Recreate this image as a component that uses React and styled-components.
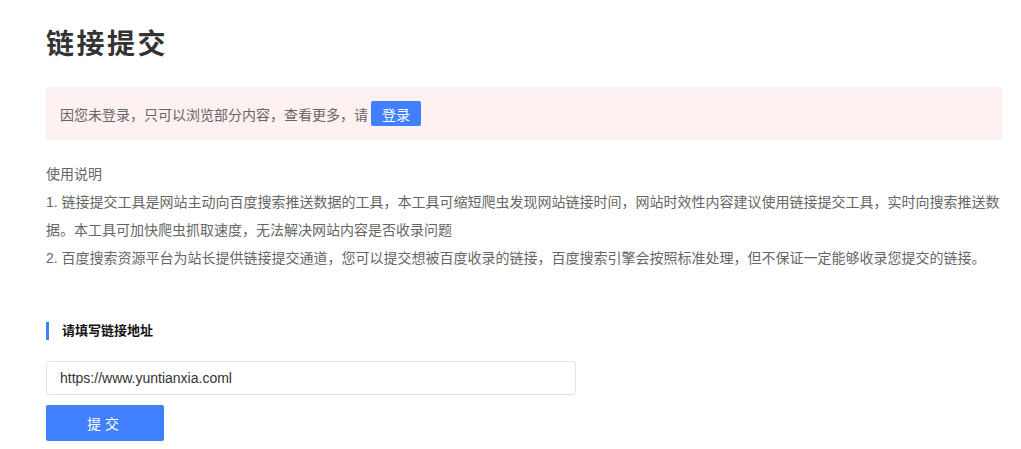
import React from 'react';
import styled, { createGlobalStyle } from 'styled-components';

const GlobalStyle = createGlobalStyle`
  html, body {
    margin: 0;
    padding: 0;
    background: #fff;
    font-family: 'Liberation Sans', 'Noto Sans CJK SC', sans-serif;
  }
`;

const Page = styled.div`
  padding: 22px 19px 0 46px;
  width: 956px;
`;

const Title = styled.h1`
  margin: 0;
  font-size: 28px;
  font-weight: 700;
  color: #333;
  line-height: 46px;
  letter-spacing: 2.5px;
`;

const Notice = styled.div`
  margin-top: 19px;
  height: 53px;
  background: #fef1f1;
  display: flex;
  align-items: center;
  padding-left: 14px;
  font-size: 14px;
  color: #666;
`;

const SmallButton = styled.button`
  margin-left: 3px;
  width: 50px;
  height: 25px;
  border: none;
  border-radius: 2px;
  background: #4080ff;
  color: #fff;
  font-size: 14px;
  font-family: inherit;
  padding: 0;
`;

const Guide = styled.div`
  margin-top: 20px;
  font-size: 14px;
  color: #666;
  line-height: 28px;
`;

const GuideLine = styled.p`
  margin: 0;
`;

const SectionTitle = styled.h2`
  margin: 50px 0 0;
  border-left: 3px solid #4080ff;
  padding-left: 13px;
  font-size: 13px;
  font-weight: 700;
  color: #111;
  line-height: 18px;
`;

const Form = styled.div`
  margin-top: 21px;
  display: flex;
  flex-direction: column;
  gap: 10px;
`;

const UrlInput = styled.input`
  box-sizing: border-box;
  width: 530px;
  height: 34px;
  border: 1px solid #e3e3e3;
  border-radius: 3px;
  padding: 0 13px;
  font-size: 14px;
  color: #333;
  font-family: 'Liberation Sans', Arial, sans-serif;
  outline: none;
`;

const SubmitButton = styled.button`
  width: 118px;
  height: 36px;
  border: none;
  border-radius: 2px;
  background: #4080ff;
  color: #fff;
  font-size: 14px;
  letter-spacing: 4px;
  font-family: inherit;
`;

const App = () => (
  <>
    <GlobalStyle />
    <Page>
      <Title>链接提交</Title>
      <Notice>
        因您未登录，只可以浏览部分内容，查看更多，请
        <SmallButton>登录</SmallButton>
      </Notice>
      <Guide>
        <GuideLine>使用说明</GuideLine>
        <GuideLine>
          1. 链接提交工具是网站主动向百度搜索推送数据的工具，本工具可缩短爬虫发现网站链接时间，网站时效性内容建议使用链接提交工具，实时向搜索推送数据。本工具可加快爬虫抓取速度，无法解决网站内容是否收录问题
        </GuideLine>
        <GuideLine>
          2. 百度搜索资源平台为站长提供链接提交通道，您可以提交想被百度收录的链接，百度搜索引擎会按照标准处理，但不保证一定能够收录您提交的链接。
        </GuideLine>
      </Guide>
      <SectionTitle>请填写链接地址</SectionTitle>
      <Form>
        <UrlInput defaultValue="https://www.yuntianxia.coml" />
        <SubmitButton>提交</SubmitButton>
      </Form>
    </Page>
  </>
);

export default App;
